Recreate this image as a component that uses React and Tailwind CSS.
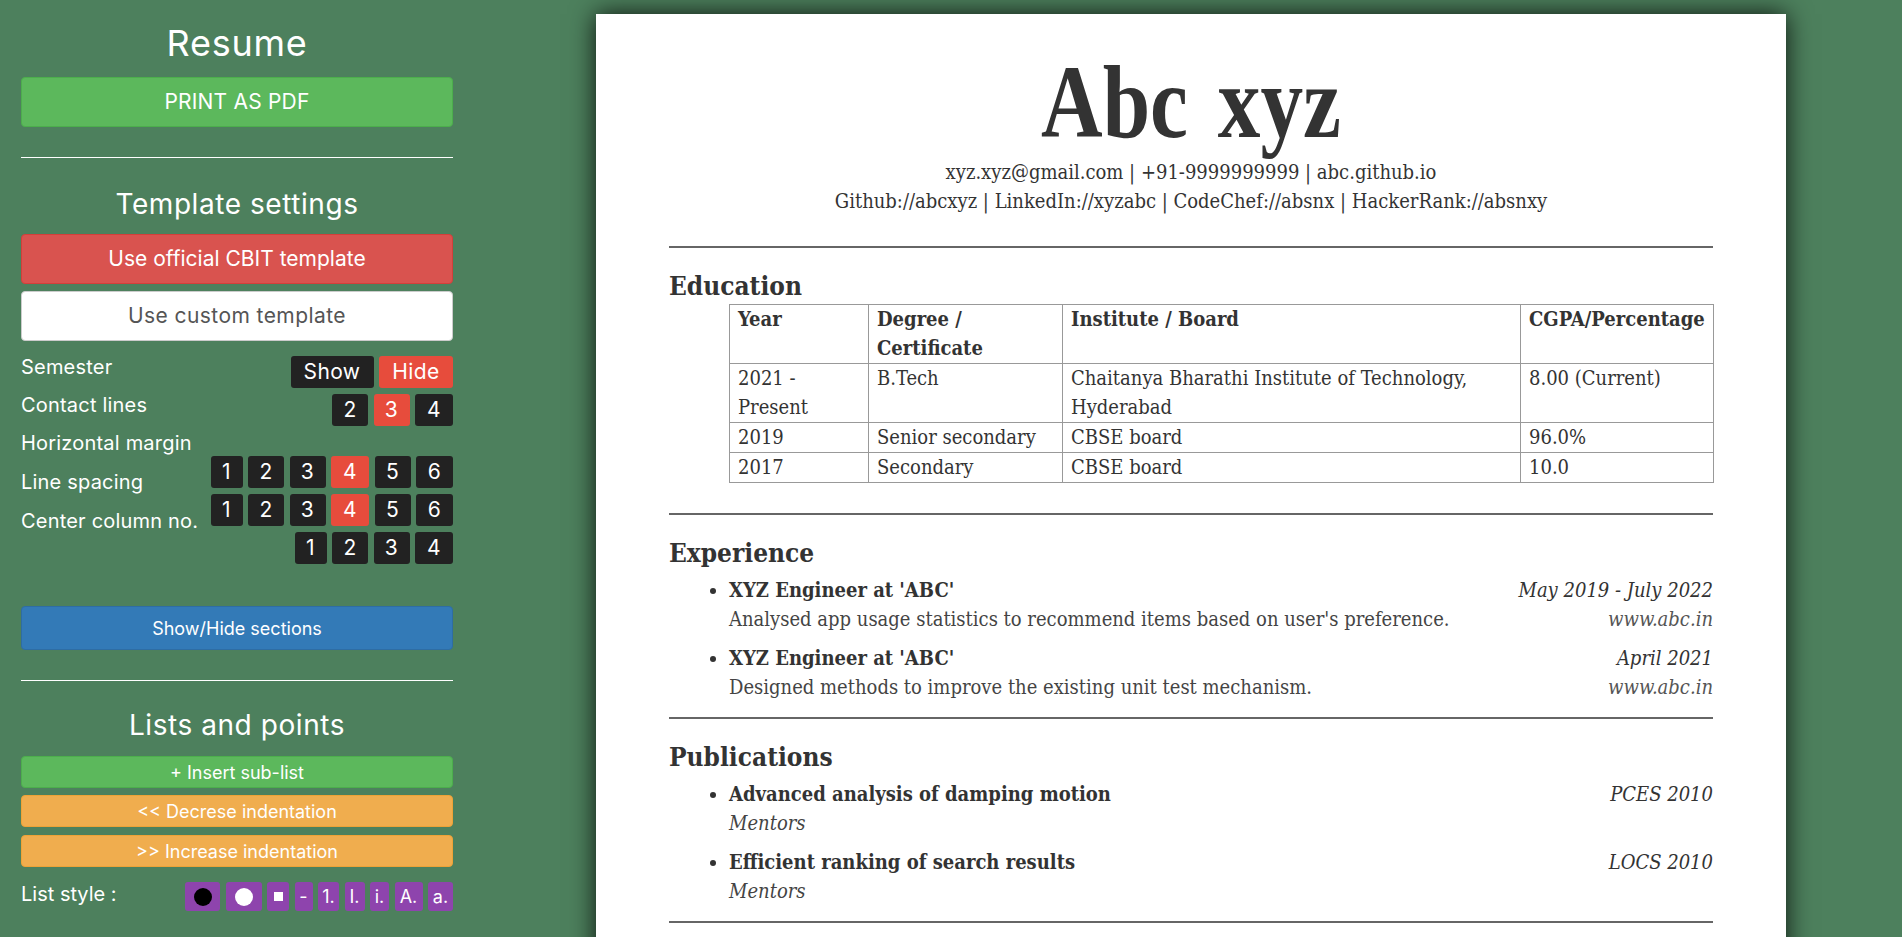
import React from 'react';

const sans = "font-['Inter','Liberation_Sans',sans-serif]";

const contactBtns = [
  { t: '2', w: 'w-[36px]' },
  { t: '3', w: 'w-[36px]', on: true },
  { t: '4', w: 'w-[38px]' },
];
const sixBtns = [
  { t: '1', w: 'w-[32px]' },
  { t: '2', w: 'w-[36px]' },
  { t: '3', w: 'w-[36px]' },
  { t: '4', w: 'w-[38px]', on: true },
  { t: '5', w: 'w-[36px]' },
  { t: '6', w: 'w-[37px]' },
];
const centerBtns = [
  { t: '1', w: 'w-[32px]' },
  { t: '2', w: 'w-[36px]' },
  { t: '3', w: 'w-[36px]' },
  { t: '4', w: 'w-[38px]' },
];
const semesterBtns = [
  { t: 'Show', w: 'w-[83px]' },
  { t: 'Hide', w: 'w-[74px]', on: true },
];

const listStyles = [
  { w: 'w-[35px]', dot: 'bg-black' },
  { w: 'w-[36px]', dot: 'bg-white' },
  { w: 'w-[22px]', t: '■', small: true },
  { w: 'w-[18px]', t: '-' },
  { w: 'w-[21px]', t: '1.' },
  { w: 'w-[20px]', t: 'I.' },
  { w: 'w-[19px]', t: 'i.' },
  { w: 'w-[28px]', t: 'A.' },
  { w: 'w-[25px]', t: 'a.' },
];

const BtnRow = ({ items }) => (
  <div className="flex justify-end gap-[5.5px] mb-[6px]">
    {items.map((b) => (
      <button
        key={b.t}
        className={`h-[32px] ${b.w} rounded-[3px] text-[21px] leading-[32px] text-white tracking-[0.02em] ${b.on ? 'bg-[#e74c3c]' : 'bg-[#222222]'}`}
      >
        {b.t}
      </button>
    ))}
  </div>
);

const Divider = ({ className }) => <hr className={`border-0 border-t border-white ${className}`} />;

const Section = ({ title, children, className }) => (
  <section className={className}>
    <h3 className="text-[26px] leading-[36px] font-bold">{title}</h3>
    {children}
  </section>
);

const Item = ({ title, right, sub, subRight, subItalic }) => (
  <li className="relative mb-[10px] before:content-[''] before:absolute before:left-[-19px] before:top-[12px] before:w-[6px] before:h-[6px] before:rounded-full before:bg-[#333333]">
    <div className="flex justify-between">
      <span className="font-bold">{title}</span>
      <span className="italic">{right}</span>
    </div>
    <div className="flex justify-between text-[#444444]">
      <span className={subItalic ? 'italic' : ''}>{sub}</span>
      {subRight && <span className="italic text-[#555555]">{subRight}</span>}
    </div>
  </li>
);

const rows = [
  ['2021 - Present', 'B.Tech', 'Chaitanya Bharathi Institute of Technology, Hyderabad', '8.00 (Current)'],
  ['2019', 'Senior secondary', 'CBSE board', '96.0%'],
  ['2017', 'Secondary', 'CBSE board', '10.0'],
];

export default function App() {
  return (
    <div className="h-screen overflow-hidden bg-[#4d805d] flex items-start">
      <aside className={`${sans} ml-[21px] w-[432px] shrink-0 text-white`}>
        <h1 className="mt-[21px] text-center text-[36px] leading-[44px] font-normal tracking-[0.02em]">Resume</h1>
        <button className="mt-[12px] block w-full h-[50px] rounded-[4px] bg-[#5cb85c] border border-[#4cae4c] text-[21px] tracking-[0.01em]">PRINT AS PDF</button>
        <Divider className="mt-[30px]" />
        <h2 className="mt-[29px] text-center text-[28px] leading-[34px] tracking-[0.02em]">Template settings</h2>
        <button className="mt-[13px] block w-full h-[50px] rounded-[4px] bg-[#d9534f] border border-[#d43f3a] text-[21px]">Use official CBIT template</button>
        <button className="mt-[7px] block w-full h-[50px] rounded-[4px] bg-white border border-[#cccccc] text-[21px] text-[#555555] tracking-[0.02em]">Use custom template</button>

        <div className="mt-[15px] flex justify-between">
          <div className="w-[190px] text-[20px] tracking-[0.01em] leading-[23px]">
            <p className="mb-[15px]">Semester</p>
            <p className="mb-[15px]">Contact lines</p>
            <p className="mb-[16px] whitespace-nowrap">Horizontal margin</p>
            <p className="mb-[16px]">Line spacing</p>
            <p>Center column no.</p>
          </div>
          <div>
            <BtnRow items={semesterBtns} />
            <BtnRow items={contactBtns} />
            <div className="h-[24px]" />
            <BtnRow items={sixBtns} />
            <BtnRow items={sixBtns} />
            <BtnRow items={centerBtns} />
          </div>
        </div>

        <button className="mt-[36px] block w-full h-[44px] rounded-[4px] bg-[#337ab7] border border-[#2e6da4] text-[18px]">Show/Hide sections</button>
        <Divider className="mt-[30px]" />
        <h2 className="mt-[27px] text-center text-[28px] leading-[34px] tracking-[0.02em]">Lists and points</h2>
        <button className="mt-[14px] block w-full h-[32px] rounded-[4px] bg-[#5cb85c] border border-[#4cae4c] text-[18px]">+ Insert sub-list</button>
        <button className="mt-[7px] block w-full h-[32px] rounded-[4px] bg-[#f0ad4e] border border-[#eea236] text-[18px]">&lt;&lt; Decrese indentation</button>
        <button className="mt-[8px] block w-full h-[32px] rounded-[4px] bg-[#f0ad4e] border border-[#eea236] text-[18px]">&gt;&gt; Increase indentation</button>
        <div className="mt-[15px] flex justify-between items-start">
          <span className="text-[20px] leading-[24px]">List style :</span>
          <div className="flex gap-[5.5px]">
            {listStyles.map((s, i) => (
              <button key={i} className={`${s.w} h-[29px] rounded-[3px] bg-[#8e44ad] flex items-center justify-center text-[18px] leading-none`}>
                {s.dot ? <span className={`block w-[18px] h-[18px] rounded-full ${s.dot}`} /> : s.small ? <span className="block w-[9px] h-[9px] bg-white" /> : s.t}
              </button>
            ))}
          </div>
        </div>
      </aside>

      <main className="ml-[143px] mt-[14px] w-[1190px] shrink-0 bg-white px-[73px] pt-[34px] text-[#333333] font-['DejaVu_Serif','Liberation_Serif',serif] [font-stretch:condensed] text-[20px] leading-[29px] shadow-[0_0_24px_rgba(0,0,0,0.85)] min-h-[1000px]">
        <header className="text-center">
          <h1 className="text-[104px] leading-[108px] font-bold font-['Liberation_Serif',serif] scale-x-[0.82] [word-spacing:0.1em]">Abc xyz</h1>
          <p className="mt-[2px]">xyz.xyz@gmail.com | +91-9999999999 | abc.github.io</p>
          <p>Github://abcxyz | LinkedIn://xyzabc | CodeChef://absnx | HackerRank://absnxy</p>
        </header>
        <hr className="mt-[30px] border-0 border-t-2 border-[#666666]" />

        <Section title="Education" className="mt-[20px]">
          <table className="ml-[60px] w-[984px] border-collapse table-fixed">
            <colgroup>
              <col className="w-[139px]" />
              <col className="w-[194px]" />
              <col className="w-[458px]" />
              <col className="w-[193px]" />
            </colgroup>
            <thead>
              <tr className="font-bold text-left align-top">
                <th className="border border-[#999999] px-[8px] pb-0">Year</th>
                <th className="border border-[#999999] px-[8px]">Degree / Certificate</th>
                <th className="border border-[#999999] px-[8px]">Institute / Board</th>
                <th className="border border-[#999999] px-[8px] whitespace-nowrap">CGPA/Percentage</th>
              </tr>
            </thead>
            <tbody>
              {rows.map((r) => (
                <tr key={r[0]} className="align-top">
                  {r.map((c) => (
                    <td key={c} className="border border-[#999999] px-[8px]">{c}</td>
                  ))}
                </tr>
              ))}
            </tbody>
          </table>
        </Section>
        <hr className="mt-[30px] border-0 border-t-2 border-[#666666]" />

        <Section title="Experience" className="mt-[20px]">
          <ul className="ml-[60px] mt-[5px]">
            <Item title="XYZ Engineer at 'ABC'" right="May 2019 - July 2022" sub="Analysed app usage statistics to recommend items based on user's preference." subRight="www.abc.in" />
            <Item title="XYZ Engineer at 'ABC'" right="April 2021" sub="Designed methods to improve the existing unit test mechanism." subRight="www.abc.in" />
          </ul>
        </Section>
        <hr className="mt-[15px] border-0 border-t-2 border-[#666666]" />

        <Section title="Publications" className="mt-[20px]">
          <ul className="ml-[60px] mt-[5px]">
            <Item title="Advanced analysis of damping motion" right="PCES 2010" sub="Mentors" subItalic />
            <Item title="Efficient ranking of search results" right="LOCS 2010" sub="Mentors" subItalic />
          </ul>
        </Section>
        <hr className="mt-[15px] border-0 border-t-2 border-[#666666]" />
      </main>
    </div>
  );
}
